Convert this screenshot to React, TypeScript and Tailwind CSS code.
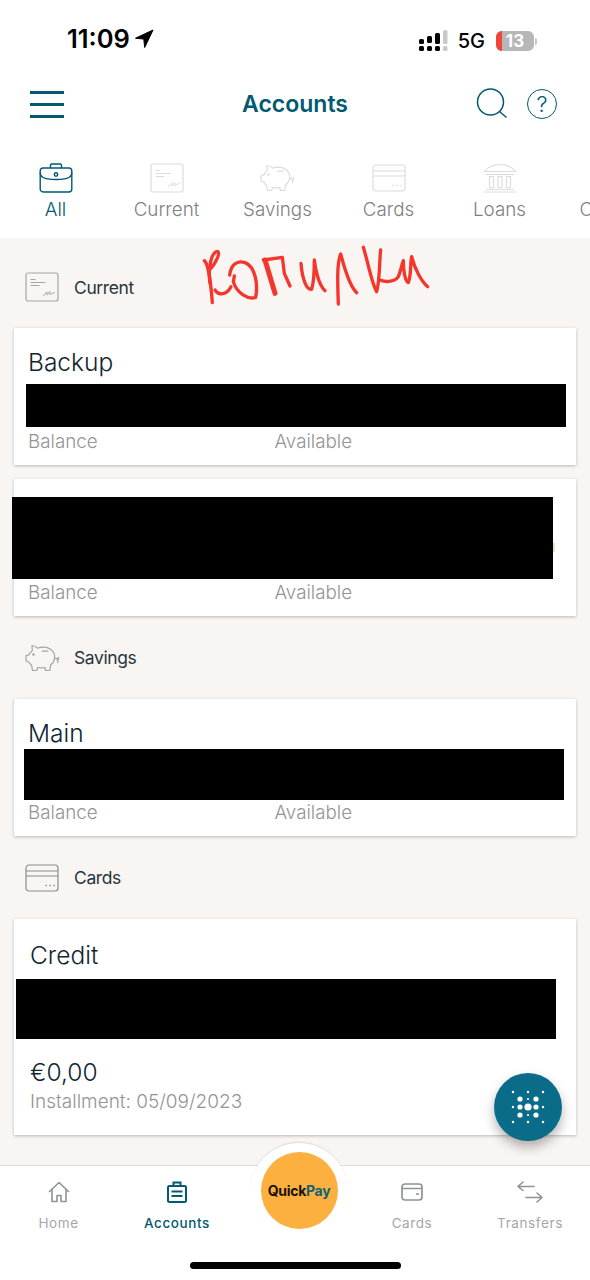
import type { ReactNode } from 'react';

const TEAL = '#005a70';

function Briefcase() {
  return (
    <svg width="34" height="30" viewBox="0 0 34 30" fill="none" stroke={TEAL} strokeWidth="1.4">
      <path d="M11.5 5V2.2C11.5 1.5 12 1 12.7 1h8.6c.7 0 1.2.5 1.2 1.200V5" />
      <rect x="1.200" y="5" width="31.600" height="24" rx="3" />
      <path d="M1.200 9.500c0 4 3 5.500 6 6.100 6 1.100 13.600 1.100 19.600 0 3-.6 6-2.100 6-6.100" />
      <circle cx="17" cy="11.500" r="1.700" />
    </svg>
  );
}

function CheckIcon({ color }: { color: string }) {
  return (
    <svg width="34" height="30" viewBox="0 0 34 30" fill="none" stroke={color} strokeWidth="1.200">
      <rect x="1" y="1" width="32" height="28" rx="2" />
      <path d="M5.500 7.500h5M5.500 10.500h15M5.500 13.500h9" />
      <path d="M18 23.500c2-.5 3-3 4-3.500s-1 3 0 3 2.500-4 3-3.500-1 3 0 3 2-1.500 5-2" strokeWidth="1" />
    </svg>
  );
}

function PiggyIcon({ color }: { color: string }) {
  return (
    <svg width="36" height="30" viewBox="0 0 36 30" fill="none" stroke={color} strokeWidth="1.200" strokeLinejoin="round">
      <path d="M7 2.500c2.500.2 4.500 1.300 5.500 2.700 4-1.700 10-1.500 13.500 1.300 2.500 2 4 5 3.600 8.500-.3 3-2 5.500-4 7l-.8 5.500h-4.300l-.7-3c-2.500.5-5 .5-7.300 0l-.8 3H7.500l-.9-5.300c-1.200-.8-2.200-2-2.800-3.200L1 18v-5.500l3-.7c.5-1.500 1.700-3 3.300-4z" />
      <path d="M17 8.500c2-.7 4.500-.7 6.500 0" />
      <circle cx="8.500" cy="11.500" r=".7" />
      <path d="M30 15c1.500 1 3 .5 3.500-.5.5 1.500-.5 2.500-1.500 2.500 1 .5 1 2 .5 3" />
    </svg>
  );
}

function CardIcon({ color }: { color: string }) {
  return (
    <svg width="34" height="28" viewBox="0 0 34 28" fill="none" stroke={color} strokeWidth="1.200">
      <rect x="1" y="1" width="32" height="26" rx="3" />
      <path d="M1 7h32M1 12h32" />
      <path d="M20.500 21.500h1.400M24.500 21.500h1.400M28.500 21.500h1.400" strokeWidth="1.600" />
    </svg>
  );
}

function BankIcon({ color }: { color: string }) {
  return (
    <svg width="34" height="30" viewBox="0 0 34 30" fill="none" stroke={color} strokeWidth="1.200">
      <path d="M1.500 8.500C5 4 11 1.500 17 1.500S29 4 32.500 8.500z" />
      <path d="M3 11.500h28" />
      <path d="M6.500 13.500h4v11h-4zM15 13.500h4v11h-4zM23.500 13.500h4v11h-4z" />
      <path d="M3.500 26.500h27M1 29h32" />
    </svg>
  );
}

function StatusBar() {
  return (
    <div className="flex h-[68px] items-end justify-between pb-[16px] pl-[67px] pr-[53px]">
      <div className="flex items-center gap-[4px]">
        <span className="text-[25.500px] font-semibold leading-[26px] text-black">11:09</span>
        <svg width="20" height="20" viewBox="0 0 20 20" fill="#000" stroke="#000" strokeWidth="1" strokeLinejoin="round">
          <path d="M19 1 1.500 9.200l8.300.9.900 8.400z" />
        </svg>
      </div>
      <div className="flex items-center">
        <svg width="30" height="22" viewBox="0 0 30 22" className="mr-[10px]">
          <g fill="#000">
            <rect x="1" y="9" width="5" height="5" rx="1.500" />
            <rect x="1" y="16" width="5" height="5" rx="1.500" />
            <rect x="9" y="6" width="5" height="7" rx="1.500" />
            <rect x="9" y="16" width="5" height="5" rx="1.500" />
            <rect x="17" y="3" width="5" height="11" rx="1.500" />
            <rect x="17" y="16" width="5" height="5" rx="1.500" />
          </g>
          <rect x="25" y="0" width="4.500" height="14" rx="1.500" fill="#c9c9c9" />
          <rect x="25" y="16" width="4.500" height="5" rx="1.500" fill="#c9c9c9" />
        </svg>
        <span className="mr-[11px] text-[20px] font-medium leading-[22px] text-black">5G</span>
        <div className="relative flex h-[20px] w-[38px] items-center justify-center overflow-hidden rounded-[6px] bg-[#b7b7b7]">
          <div className="absolute bottom-0 left-0 top-0 w-[6px] bg-[#f0453a]" />
          <span className="relative text-[17px] font-bold leading-none text-white">13</span>
        </div>
        <div className="ml-[1px] h-[7px] w-[2px] rounded-r-sm bg-[#c4c4c4]" />
      </div>
    </div>
  );
}

function TopBar() {
  return (
    <div className="flex h-[72px] items-center pl-[30px] pr-[33px]">
      <div className="flex-1">
        <div className="flex w-[34px] flex-col gap-[9px]">
          <div className="h-[3px] bg-[#005a70]" />
          <div className="h-[3px] bg-[#005a70]" />
          <div className="h-[3px] bg-[#005a70]" />
        </div>
      </div>
      <span className="ml-[3px] text-[23px] font-semibold text-[#005a70]">Accounts</span>
      <div className="flex flex-1 items-center justify-end gap-[19px]">
        <svg width="32" height="32" viewBox="0 0 32 32" fill="none" stroke={TEAL} strokeWidth="1.500">
          <circle cx="14.500" cy="14" r="13" />
          <path d="m23.500 23.500 7 6" />
        </svg>
        <div className="flex h-[30px] w-[30px] items-center justify-center rounded-full border-[1.500px] border-[#005a70] text-[22px] font-light leading-none text-[#005a70]">
          ?
        </div>
      </div>
    </div>
  );
}

function Tab({ label, icon, active }: { label: string; icon?: ReactNode; active?: boolean }) {
  return (
    <div className="flex w-[111px] shrink-0 flex-col items-center">
      <div className="flex h-[30px] items-center justify-center">{icon}</div>
      <span className={`mt-[4px] text-[18.800px] font-light leading-[26px] ${active ? 'text-[#005a70]' : 'text-[#7d8185]'}`}>
        {label}
      </span>
    </div>
  );
}

function Tabs() {
  const off = '#dcdcdc';
  return (
    <div className="flex h-[98px] overflow-hidden bg-white pt-[23px]">
      <Tab label="All" icon={<Briefcase />} active />
      <Tab label="Current" icon={<CheckIcon color={off} />} />
      <Tab label="Savings" icon={<PiggyIcon color={off} />} />
      <Tab label="Cards" icon={<CardIcon color={off} />} />
      <Tab label="Loans" icon={<BankIcon color={off} />} />
      <Tab label="Credits" />
    </div>
  );
}

function SectionHead({ label, icon, first }: { label: string; icon: ReactNode; first?: boolean }) {
  return (
    <div className={`flex items-center pl-[11px] ${first ? 'h-[90px] pt-[8px]' : 'h-[83px]'}`}>
      <div className="flex w-[49px] justify-start">{icon}</div>
      <span className="mt-[2px] text-[17.500px] tracking-[-0.4px] text-[#27343c]">{label}</span>
    </div>
  );
}

function BalanceRow() {
  return (
    <div className="flex text-[18.800px] font-light leading-[24px] text-[#949494]">
      <span className="w-[246.500px]">Balance</span>
      <span>Available</span>
    </div>
  );
}

function AccountCard({ title, children, className }: { title?: string; children: ReactNode; className?: string }) {
  return (
    <div className={`relative h-[137px] bg-white pl-[14px] shadow-[0_1px_3px_rgba(0,0,0,0.25)] ${className ?? ''}`}>
      <div className="h-[102px] pt-[19px] text-[24.500px] font-light leading-[30px] text-[#122530]">{title}</div>
      <BalanceRow />
      {children}
    </div>
  );
}

function Scribble() {
  return (
    <svg
      className="absolute left-[195px] top-[240px]"
      width="245"
      height="75"
      viewBox="0 0 735 225"
      fill="none"
      stroke="#f4362c"
      strokeWidth="10"
      strokeLinecap="round"
      strokeLinejoin="round"
    >
      <path d="M28 62C38 70 45 100 52 188" />
      <path d="M45 130C38 80 50 35 68 34 78 40 60 70 48 85" />
      <path d="M60 150C70 168 95 165 108 140" />
      <path d="M104 105C108 75 125 60 150 68 180 80 190 130 182 172 160 180 125 160 115 125L118 108" />
      <path d="M205 60 262 52 268 100 285 138" />
      <path d="M210 60 240 160" strokeWidth="15" />
      <path d="M318 70C322 120 335 150 350 148 358 120 358 80 358 60 362 100 375 140 390 152" />
      <path d="M430 192C428 130 425 70 437 42 445 70 460 135 485 158" />
      <path d="M505 22C520 70 530 130 545 155 555 120 553 60 557 30" />
      <path d="M555 120C575 128 600 125 610 110 618 90 620 75 625 62 625 90 630 125 640 128 650 100 645 70 650 50 660 90 680 125 698 140" />
    </svg>
  );
}

function NavItem({ label, icon, className, active }: { label: string; icon: ReactNode; className: string; active?: boolean }) {
  return (
    <div className={`flex flex-col items-center ${className}`}>
      <div className="flex h-[30px] items-center justify-center">{icon}</div>
      <span
        className={`mt-[7px] text-[13.500px] leading-[18px] tracking-[0.6px] ${active ? 'font-medium text-[#005a70]' : 'text-[#a4a7a9]'}`}
      >
        {label}
      </span>
    </div>
  );
}

function BottomNav() {
  return (
    <div className="relative h-[115px] border-t border-[#dedbd8] bg-white pt-[11px]">
      <div className="flex">
        <NavItem
          className="w-[117px]"
          label="Home"
          icon={
            <svg width="22" height="22" viewBox="0 0 22 22" fill="none" stroke="#8f9396" strokeWidth="1.600" strokeLinejoin="round">
              <path d="M1 11 11 1.500 21 11M4 8.500V20.500h5v-6h4v6h5V8.500" />
            </svg>
          }
        />
        <NavItem
          className="w-[120px]"
          label="Accounts"
          active
          icon={
            <svg width="20" height="22" viewBox="0 0 20 22" fill="none" stroke={TEAL} strokeWidth="2">
              <rect x="1" y="5" width="18" height="16" rx="1.500" />
              <path d="M6.500 5V1.500h7V5M4.500 10.500h11M4.500 15h11" />
            </svg>
          }
        />
        <div className="w-[116px]" />
        <NavItem
          className="w-[118px]"
          label="Cards"
          icon={
            <svg width="22" height="18" viewBox="0 0 22 18" fill="none" stroke="#8f9396" strokeWidth="1.700">
              <rect x="1" y="1" width="20" height="16" rx="3" />
              <path d="M1 5.500h20M15 11h3" />
            </svg>
          }
        />
        <NavItem
          className="w-[118px]"
          label="Transfers"
          icon={
            <svg width="26" height="22" viewBox="0 0 26 22" fill="none" stroke="#8f9396" strokeWidth="1.600" strokeLinecap="round" strokeLinejoin="round">
              <path d="M6 1 1 5.500 6 9.500M1 5.500h16M20 12l5 4.500-5 4.500M25 16.500H9" />
            </svg>
          }
        />
      </div>
      <div className="absolute bottom-[11px] left-[190px] h-[7px] w-[211px] rounded-full bg-black" />
    </div>
  );
}

function QuickPay() {
  return (
    <div className="absolute left-[250px] top-[1143px] flex h-[98px] w-[98px] items-start justify-center rounded-full bg-white pt-[9px] shadow-[0_-2px_2px_-1px_rgba(0,0,0,0.12)]">
      <div className="flex h-[77px] w-[77px] items-center justify-center rounded-full bg-[#fbb03f]">
        <span className="text-[14px] font-bold tracking-[-0.3px] text-[#1a1206]">
          Quick<span className="text-[#0f6372]">Pay</span>
        </span>
      </div>
    </div>
  );
}

function Fab() {
  const dots = [
    [-15, -15, 1.200], [0, -15, 1.200], [15, -15, 1.200],
    [-8, -8, 2.600], [0, -8, 1.100], [8, -8, 2.600],
    [-15, 0, 1.200], [-8, 0, 2.600], [0, 0, 3.600], [8, 0, 2.600], [15, 0, 1.200],
    [-8, 8, 2.600], [0, 8, 1.100], [8, 8, 2.600],
    [-15, 15, 1.200], [0, 15, 1.200], [15, 15, 1.200],
  ];
  return (
    <div className="absolute left-[494px] top-[1073px] flex h-[68px] w-[68px] items-center justify-center rounded-full bg-[#0a6c89] shadow-[0_6px_12px_rgba(0,0,0,0.3)]">
      <svg width="40" height="40" viewBox="-20 -20 40 40" fill="#fff">
        {dots.map(([x, y, r]) => (
          <circle key={`${x}-${y}`} cx={x} cy={y} r={r} />
        ))}
      </svg>
    </div>
  );
}

export default function App() {
  return (
    <div className="relative h-[1280px] w-[590px] overflow-hidden bg-white font-['Inter',sans-serif]">
      <StatusBar />
      <TopBar />
      <Tabs />

      <div className="h-[927px] bg-[#f9f5f2] px-[14px]">
        <SectionHead first label="Current" icon={<CheckIcon color="#a5a5a5" />} />
        <AccountCard title="Backup">
          <div className="absolute left-[12px] top-[56px] h-[43px] w-[540px] bg-black" />
        </AccountCard>
        <AccountCard className="mt-[14px]">
          <div className="absolute left-[-2px] top-[18px] h-[82px] w-[541px] bg-black" />
          {/* faint edge of the hidden amount, just past the black bar */}
          <div className="absolute left-[539px] top-[64px] h-[9px] w-[2px] bg-[#f5dcc0]" />
        </AccountCard>

        <SectionHead label="Savings" icon={<PiggyIcon color="#a5a5a5" />} />
        <AccountCard title="Main">
          <div className="absolute left-[10px] top-[50px] h-[51px] w-[540px] bg-black" />
        </AccountCard>

        <SectionHead label="Cards" icon={<CardIcon color="#8c8c8c" />} />
        <div className="relative h-[216px] bg-white pl-[16px] pt-[21px] shadow-[0_1px_3px_rgba(0,0,0,0.25)]">
          <div className="text-[24.500px] font-light leading-[30px] text-[#122530]">Credit</div>
          <div className="mt-[87px] text-[24.500px] font-light leading-[30px] text-[#122530]">€0,00</div>
          <div className="mt-[2px] text-[19px] font-light leading-[26px] text-[#949494]">Installment: 05/09/2023</div>
          <div className="absolute left-[2px] top-[60px] h-[60px] w-[540px] bg-black" />
        </div>
      </div>

      <BottomNav />

      <Scribble />
      <QuickPay />
      <Fab />
    </div>
  );
}
